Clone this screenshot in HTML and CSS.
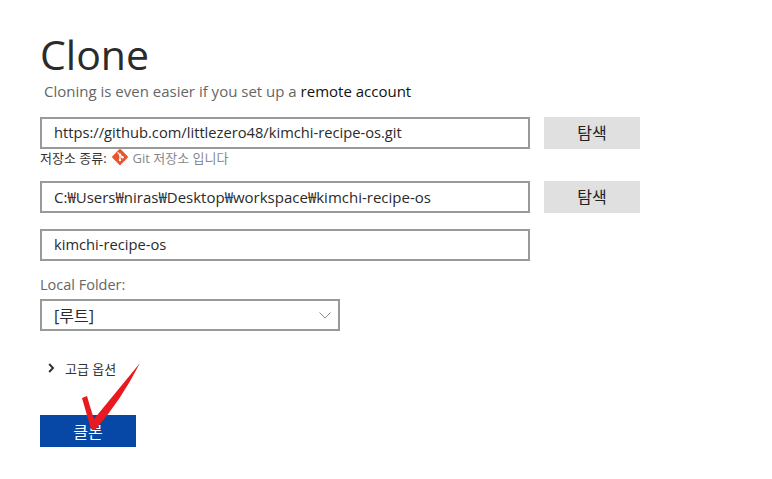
FILE: index.html
```html
<!DOCTYPE html>
<html lang="ko">
<head>
  <meta charset="UTF-8">
  <title>Clone</title>
  <link rel="stylesheet" href="styles.css">
</head>
<body>
  <div class="main">
    <h1>Clone</h1>
    <p class="subtitle">Cloning is even easier if you set up a <a href="#account">remote account</a></p>

    <!-- Repository url -->
    <div class="row">
      <input class="field" type="text" value="https://github.com/littlezero48/kimchi-recipe-os.git">
      <button class="browse-btn" type="button">탐색</button>
    </div>
    <div class="repo-type">
      <span>저장소 종류:</span>
      <svg class="git-icon" width="16" height="16" viewBox="0 0 16 16">
        <path fill="#e8562f" d="M7 .6a1.4 1.4 0 0 1 2 0l6.400 6.400a1.400 1.400 0 0 1 0 2L9 15.400a1.400 1.400 0 0 1-2 0L.6 9a1.400 1.400 0 0 1 0-2z"/>
        <path fill="none" stroke="#fff" stroke-width="1.2" d="M5.600 3.400 8 5.800v5M8 5.800l2.400 2.400"/>
        <circle fill="#fff" cx="8" cy="5.800" r="1.200"/>
        <circle fill="#fff" cx="8" cy="11" r="1.200"/>
        <circle fill="#fff" cx="10.500" cy="8.300" r="1.200"/>
      </svg>
      <span class="repo-type-value">Git 저장소 입니다</span>
    </div>

    <!-- Local path -->
    <div class="row row-path">
      <input class="field field-path" type="text" value="C:₩Users₩niras₩Desktop₩workspace₩kimchi-recipe-os">
      <button class="browse-btn" type="button">탐색</button>
    </div>
    <div class="row row-name">
      <input class="field" type="text" value="kimchi-recipe-os">
    </div>

    <label class="folder-label">Local Folder:</label>
    <div class="select-box">
      <span>[루트]</span>
      <svg width="12" height="7" viewBox="0 0 12 7"><path fill="none" stroke="#8a8a8a" d="M.5.5 6 6l5.500-5.500"/></svg>
    </div>

    <div class="advanced">
      <svg width="7" height="10" viewBox="0 0 7 10"><path fill="none" stroke="#333" stroke-width="2" d="M1.200 1 5 5 1.200 9"/></svg>
      <span>고급 옵션</span>
    </div>

    <button class="clone-btn" type="button">클론</button>
  </div>

  <!-- Red check mark drawn over the screenshot -->
  <svg class="check-mark" width="70" height="80" viewBox="0 0 70 80">
    <path fill="#e8191f" d="M2 36 7 34Q10 45 14 57L60 1Q40 40 15 68L11 67Q6 50 2 36z"/>
  </svg>
</body>
</html>
```

FILE: styles.css
```css
/* Reset and Basic Styles */
* {
  margin: 0;
  padding: 0;
  box-sizing: border-box;
  font-family: 'Open Sans', 'Noto Sans CJK KR', sans-serif;
}

body {
  position: relative;
  width: 772px;
  height: 479px;
  overflow: hidden;
  background-color: #fff;
}

.main {
  padding: 29px 0 0 40px;
}

h1 {
  font-size: 41px;
  font-weight: 400;
  line-height: 50px;
  color: #2b2b2b;
}

.subtitle {
  margin: 2px 0 0 4px;
  font-size: 15px;
  line-height: 20px;
  color: #666;
}

.subtitle a {
  color: #111;
  text-decoration: none;
}

/* Form rows */
.row {
  display: flex;
  gap: 14px;
  margin-top: 16px;
}

.field {
  width: 490px;
  height: 32px;
  padding: 0 12px 2px;
  border: 2px solid #999;
  font-size: 14.7px;
  color: #2b2b2b;
  background: #fff;
  outline: none;
}

.field-path {
  font-size: 15px;
}

.browse-btn {
  width: 96px;
  height: 32px;
  padding-bottom: 2px;
  border: none;
  background-color: #e0e0e0;
  font-size: 16px;
  color: #222;
}

.repo-type {
  display: flex;
  align-items: center;
  gap: 5px;
  height: 16px;
  font-size: 13px;
  color: #333;
}

.repo-type-value {
  color: #888;
}

.folder-label {
  display: block;
  margin-top: 14px;
  font-size: 14.5px;
  line-height: 20px;
  color: #666;
}

.select-box {
  display: flex;
  justify-content: space-between;
  align-items: center;
  width: 300px;
  height: 32px;
  margin-top: 4px;
  padding: 0 7px 0 12px;
  border: 2px solid #999;
  font-size: 16px;
  color: #2b2b2b;
}

.advanced {
  display: flex;
  align-items: center;
  gap: 10px;
  height: 16px;
  margin: 29px 0 0 8px;
  font-size: 13px;
  color: #333;
}

.clone-btn {
  display: block;
  width: 96px;
  height: 32px;
  margin-top: 39px;
  border: none;
  background-color: #0747a6;
  font-size: 16px;
  color: #fff;
}

/* Annotation over the button */
.check-mark {
  position: absolute;
  top: 362px;
  left: 80px;
}
```
